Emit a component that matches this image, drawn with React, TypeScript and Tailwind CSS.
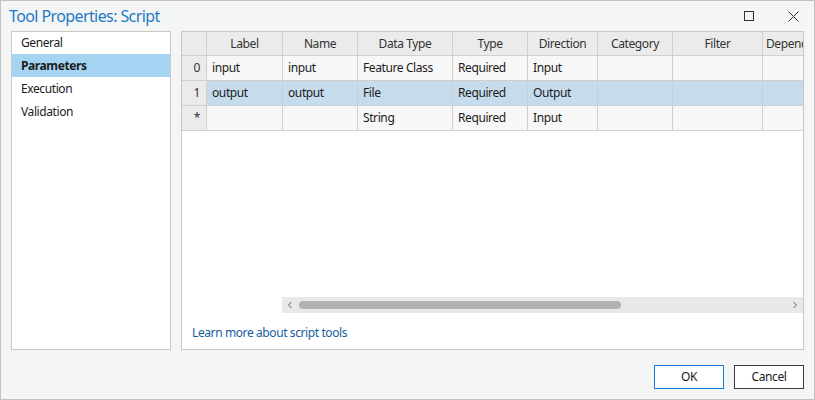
import React from "react";

const cols = [
  { name: "Label", w: 76 },
  { name: "Name", w: 75 },
  { name: "Data Type", w: 95 },
  { name: "Type", w: 75 },
  { name: "Direction", w: 70 },
  { name: "Category", w: 75 },
  { name: "Filter", w: 90 },
  { name: "Dependency", w: 80 },
];

const rows = [
  { idx: "0", cells: ["input", "input", "Feature Class", "Required", "Input", "", "", ""], sel: false },
  { idx: "1", cells: ["output", "output", "File", "Required", "Output", "", "", ""], sel: true },
  { idx: "*", cells: ["", "", "String", "Required", "Input", "", "", ""], sel: false },
];

export default function App() {
  return (
    <div
      className="w-[815px] h-[400px] border border-[#c3c3c3] bg-[#f4f6f5] flex flex-col text-[#1b1b1b] overflow-hidden tracking-[-0.4px]"
      style={{ fontFamily: '"Noto Sans", "Open Sans", sans-serif' }}
    >
      {/* title bar */}
      <div className="h-[30px] flex items-center pl-[8px] pr-[15px] shrink-0">
        <div className="text-[16px] text-[#2479c4] leading-none tracking-[-0.6px]">Tool Properties: Script</div>
        <div className="flex-1" />
        <div className="w-[10px] h-[10px] border border-[#333]" />
        <div className="ml-[34px] w-[11px] h-[11px] relative">
          <svg width="11" height="11" viewBox="0 0 11 11">
            <path d="M0.5 0.5 L10.5 10.5 M10.5 0.5 L0.5 10.5" stroke="#333" strokeWidth="1" />
          </svg>
        </div>
      </div>

      {/* body */}
      <div className="flex px-[10px] gap-[10px] h-[319px] shrink-0">
        <div className="w-[160px] border border-[#c8c8c8] bg-white flex flex-col text-[12px]">
          <div className="h-[22px] flex items-center pl-[9px]">General</div>
          <div className="h-[23px] flex items-center pl-[9px] bg-[#a4d4f2] font-bold">Parameters</div>
          <div className="h-[23px] flex items-center pl-[9px]">Execution</div>
          <div className="h-[23px] flex items-center pl-[9px]">Validation</div>
        </div>

        <div className="flex-1 border border-[#c8c8c8] bg-white flex flex-col overflow-hidden">
          <div className="flex flex-col text-[12px] overflow-hidden">
            {/* header */}
            <div className="flex h-[24px] shrink-0">
              <div className="w-[25px] shrink-0 bg-[#ebebeb] border-r border-b border-[#cfcfcf]" />
              {cols.map((c, i) => (
                <div
                  key={c.name}
                  style={{ width: c.w }}
                  className={
                    "shrink-0 bg-[#ebebeb] border-r border-b border-[#cfcfcf] flex items-center whitespace-nowrap overflow-hidden text-[#333] " +
                    (i === cols.length - 1 ? "justify-start pl-[3px]" : "justify-center")
                  }
                >
                  {c.name}
                </div>
              ))}
            </div>
            {rows.map((r) => (
              <div key={r.idx} className="flex h-[25px] shrink-0">
                <div className="w-[25px] shrink-0 bg-[#ebebeb] border-r border-b border-[#cfcfcf] flex items-center justify-end pr-[6px] text-[#333]">
                  {r.idx}
                </div>
                {r.cells.map((t, i) => (
                  <div
                    key={i}
                    style={{ width: cols[i].w }}
                    className={
                      "shrink-0 border-r border-b border-[#cfcfcf] flex items-center pl-[5px] whitespace-nowrap overflow-hidden " +
                      (r.sel ? "bg-[#c6dced]" : "bg-[#f7f7f7]")
                    }
                  >
                    {t}
                  </div>
                ))}
              </div>
            ))}
          </div>

          <div className="flex-1" />

          {/* scrollbar */}
          <div className="ml-[100px] h-[16px] bg-[#e8e8e8] flex items-center shrink-0">
            <svg width="17" height="16" viewBox="0 0 17 16" className="shrink-0">
              <path d="M9.5 5 L6.5 8 L9.5 11" stroke="#606060" strokeWidth="1" fill="none" />
            </svg>
            <div className="w-[322px] h-[8px] rounded-full bg-[#b2b2b2]" />
            <div className="flex-1" />
            <svg width="17" height="16" viewBox="0 0 17 16" className="shrink-0">
              <path d="M7.5 5 L10.5 8 L7.5 11" stroke="#606060" strokeWidth="1" fill="none" />
            </svg>
          </div>

          <div className="h-[36px] flex items-center pl-[10px] text-[12px] text-[#145d9c] shrink-0 pt-[3px]">
            Learn more about script tools
          </div>
        </div>
      </div>

      {/* buttons */}
      <div className="flex-1 flex items-start justify-end pr-[10px] pt-[15px] gap-[10px]">
        <button className="w-[70px] h-[24px] border border-[#1a7ad4] bg-white text-[12px] text-[#1b1b1b]">OK</button>
        <button className="w-[70px] h-[24px] border border-[#3a3a3a] bg-white text-[12px] text-[#1b1b1b]">Cancel</button>
      </div>
    </div>
  );
}
